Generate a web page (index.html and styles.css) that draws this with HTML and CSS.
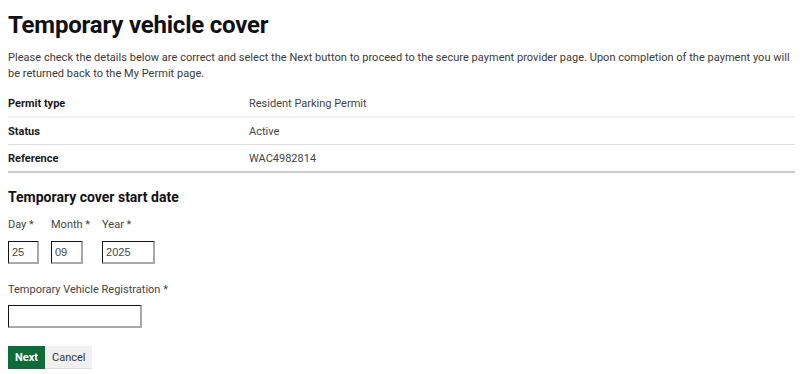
FILE: index.html
```html
<!DOCTYPE html>
<html lang="en">
<head>
<meta charset="utf-8">
<title>Temporary vehicle cover</title>
<link rel="stylesheet" href="styles.css">
</head>
<body>
<main class="page">
  <h1 class="title">Temporary vehicle cover</h1>
  <p class="intro">Please check the details below are correct and select the Next button to proceed to the secure payment provider page. Upon completion of the payment you will be returned back to the My Permit page.</p>
  <table class="details">
    <tr class="row row-1"><th>Permit type</th><td>Resident Parking Permit</td></tr>
    <tr class="row row-2"><th>Status</th><td>Active</td></tr>
    <tr class="row row-3"><th>Reference</th><td>WAC4982814</td></tr>
  </table>
  <h2 class="subtitle">Temporary cover start date</h2>
  <div class="date">
    <label class="field">
      <span class="label">Day *</span>
      <input class="input input-day" type="text" value="25">
    </label>
    <label class="field">
      <span class="label">Month *</span>
      <input class="input input-month" type="text" value="09">
    </label>
    <label class="field">
      <span class="label">Year *</span>
      <input class="input input-year" type="text" value="2025">
    </label>
  </div>
  <label class="field reg">
    <span class="label">Temporary Vehicle Registration *</span>
    <input class="input input-reg" type="text">
  </label>
  <div class="actions">
    <button class="btn btn-next" type="button">Next</button>
    <button class="btn btn-cancel" type="button">Cancel</button>
  </div>
</main>
</body>
</html>
```

FILE: styles.css
```css
html, body {
  margin: 0;
  padding: 0;
  background: #ffffff;
}
body {
  font-family: Roboto, "Liberation Sans", Arial, sans-serif;
  color: #333333;
}
.page {
  padding: 8px 8px 0 8px;
  box-sizing: border-box;
  width: 800px;
}
.title {
  margin: 3px 0 0 0;
  font-size: 24px;
  line-height: 28px;
  font-weight: 700;
  color: #111111;
  letter-spacing: -0.2px;
}
.intro {
  margin: 11px 0 0 0;
  font-size: 11px;
  line-height: 16px;
  color: #3a3a3a;
  letter-spacing: 0.03px;
}
.details {
  width: 787px;
  border-collapse: collapse;
  margin-top: 8px;
  font-size: 11px;
}
.details th,
.details td {
  text-align: left;
  padding: 0;
  height: 26px;
  vertical-align: middle;
}
.details th {
  width: 241px;
  font-weight: 700;
  color: #1a1a1a;
}
.details td {
  color: #444444;
}
.row-1 { border-bottom: 2px solid #f1f1f1; }
.row-2 { border-bottom: 1px solid #dddddd; }
.row-3 { border-bottom: 2px solid #cccccc; }
.subtitle {
  margin: 15px 0 0 0;
  font-size: 14px;
  line-height: 18px;
  font-weight: 700;
  color: #111111;
}
.date {
  display: flex;
  gap: 12px;
  margin-top: 11px;
}
.field {
  display: flex;
  flex-direction: column;
  align-items: flex-start;
}
.label {
  font-size: 11px;
  line-height: 16px;
  color: #444444;
}
.input {
  margin-top: 8px;
  height: 23px;
  box-sizing: border-box;
  padding: 0 3px;
  border-style: solid;
  border-width: 1px 2px 2px 1px;
  border-color: #111111 #a9a9a9 #a9a9a9 #111111;
  border-radius: 0;
  font-family: "Liberation Sans", Arial, sans-serif;
  font-size: 11px;
  color: #444444;
  background: #ffffff;
  outline: none;
}
.input-day { width: 31px; }
.input-month { width: 32px; }
.input-year { width: 53px; }
.reg {
  margin-top: 18px;
}
.input-reg {
  width: 134px;
  margin-top: 7px;
}
.actions {
  display: flex;
  margin-top: 18px;
}
.btn {
  height: 23px;
  border: 0;
  margin: 0;
  padding: 0 7px;
  font-family: Roboto, "Liberation Sans", Arial, sans-serif;
  font-size: 11px;
  border-radius: 0;
}
.btn-next {
  width: 37px;
  background: #0f6b3a;
  color: #ffffff;
  font-weight: 700;
}
.btn-cancel {
  width: 47px;
  background: #f0f0f0;
  color: #333333;
  border-bottom: 1px solid #dcdcdc;
}
```
